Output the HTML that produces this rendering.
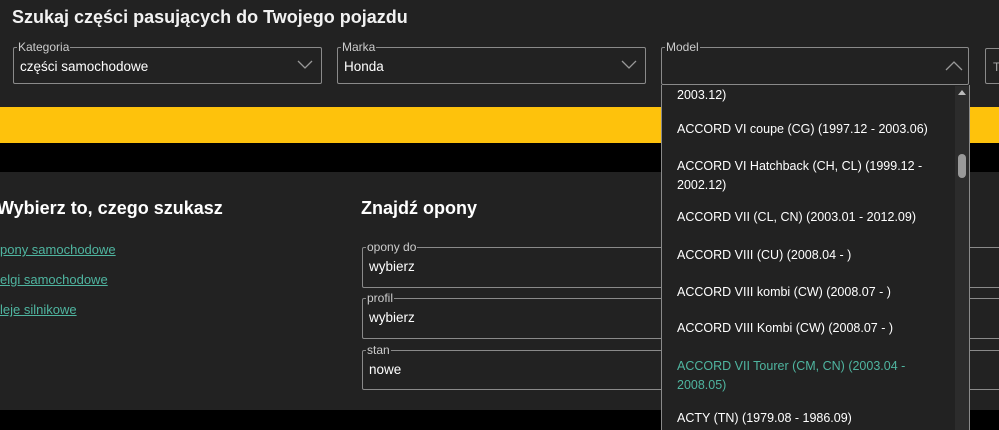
<!DOCTYPE html><html><head><style>
body{margin:0;width:999px;height:430px;overflow:hidden;background:#000;font-family:"Liberation Sans",sans-serif;color:#fff;position:relative}
.a{position:absolute}
fieldset{position:absolute;margin:0;border:1px solid #8a8a8a;border-radius:2px;padding:0 6px;box-sizing:border-box}
legend{font-size:12px;color:#ccc;padding:0 1px;margin-left:-3px;line-height:10px}
.v{font-size:13.5px;margin-top:7px}
.it{position:absolute;left:677px;font-size:12.5px;line-height:19px;width:260px}
a{color:#4fb5a0;font-size:13px;text-decoration:underline;position:absolute}
</style></head><body>
<div class="a" style="left:0;top:0;width:999px;height:107px;background:#222"></div>
<div class="a" style="left:0;top:107px;width:999px;height:36px;background:#fec20c"></div>
<div class="a" style="left:0;top:172px;width:999px;height:238px;background:#222"></div>
<div class="a" style="left:12px;top:7px;font-size:18px;font-weight:bold;color:#f2f2f2">Szukaj części pasujących do Twojego pojazdu</div>
<fieldset style="left:13px;top:42px;width:309px;height:42px"><legend>Kategoria</legend><div class="v">części samochodowe</div></fieldset>
<fieldset style="left:337px;top:42px;width:309px;height:42px"><legend>Marka</legend><div class="v">Honda</div></fieldset>
<fieldset style="left:985px;top:48px;width:40px;height:36px"></fieldset>
<div class="a" style="left:993px;top:60px;font-size:12px;color:#aaa">T</div>
<svg class="a" style="left:297px;top:60px" width="16" height="10"><path d="M1 1L8 8L15 1" stroke="#999" fill="none" stroke-width="1.3"/></svg>
<svg class="a" style="left:621px;top:60px" width="16" height="10"><path d="M1 1L8 8L15 1" stroke="#999" fill="none" stroke-width="1.3"/></svg>
<div class="a" style="left:-3px;top:198px;font-size:18px;font-weight:bold">Wybierz to, czego szukasz</div>
<a style="left:0;top:242px">pony samochodowe</a>
<a style="left:0;top:272px">elgi samochodowe</a>
<a style="left:0;top:302px">leje silnikowe</a>
<div class="a" style="left:361px;top:198px;font-size:18px;font-weight:bold">Znajdź opony</div>
<fieldset style="left:362px;top:242px;width:660px;height:46px"><legend>opony do</legend><div class="v">wybierz</div></fieldset>
<fieldset style="left:362px;top:293px;width:660px;height:46px"><legend>profil</legend><div class="v">wybierz</div></fieldset>
<fieldset style="left:362px;top:345px;width:660px;height:45px"><legend>stan</legend><div class="v">nowe</div></fieldset>
<fieldset style="left:661px;top:42px;width:308px;height:43px;background:#222"><legend>Model</legend></fieldset>
<svg class="a" style="left:945px;top:60px" width="18" height="11"><path d="M1 10L9 2L17 10" stroke="#999" fill="none" stroke-width="1.3"/></svg>
<div class="a" style="left:661px;top:85px;width:307px;height:345px;background:#222;border-left:1px solid #8a8a8a;border-right:1px solid #8a8a8a"></div>
<div class="a" style="left:955px;top:86px;width:14px;height:344px;background:#2c2c2c"></div>
<svg class="a" style="left:957px;top:88px" width="10" height="8"><path d="M1 7L5 2L9 7Z" fill="#bbb"/></svg>
<div class="a" style="left:958px;top:154px;width:8px;height:24px;background:#999;border-radius:4px"></div>
<div class="it" style="top:86px">2003.12)</div>
<div class="it" style="top:120px">ACCORD VI coupe (CG) (1997.12 - 2003.06)</div>
<div class="it" style="top:157px">ACCORD VI Hatchback (CH, CL) (1999.12 - 2002.12)</div>
<div class="it" style="top:208px">ACCORD VII (CL, CN) (2003.01 - 2012.09)</div>
<div class="it" style="top:246px">ACCORD VIII (CU) (2008.04 - )</div>
<div class="it" style="top:283px">ACCORD VIII kombi (CW) (2008.07 - )</div>
<div class="it" style="top:319px">ACCORD VIII Kombi (CW) (2008.07 - )</div>
<div class="it" style="top:357px;color:#4fb5a0">ACCORD VII Tourer (CM, CN) (2003.04 - 2008.05)</div>
<div class="it" style="top:409px">ACTY (TN) (1979.08 - 1986.09)</div>
</body></html>
